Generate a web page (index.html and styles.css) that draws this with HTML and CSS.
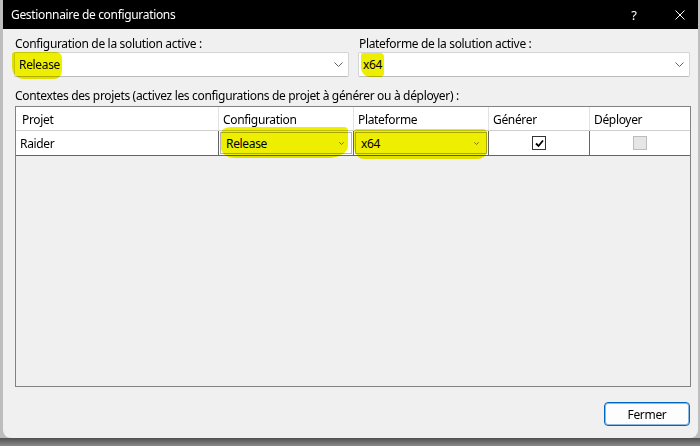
FILE: index.html
```html
<!DOCTYPE html>
<html lang="fr">
<head>
<meta charset="utf-8">
<title>Gestionnaire de configurations</title>
<link rel="stylesheet" href="styles.css">
</head>
<body>
<div class="screen">
  <div class="edge"></div>
  <div class="dialog">
    <div class="titlebar">
      <span class="title">Gestionnaire de configurations</span>
      <div class="tb-buttons">
        <span class="tb-help">?</span>
        <svg class="tb-close" width="10" height="10" viewBox="0 0 10 10"><path d="M0.5 0.5 L9.5 9.5 M9.5 0.5 L0.5 9.5" stroke="#ffffff" stroke-width="1" fill="none"/></svg>
      </div>
    </div>
    <div class="content">
      <div class="top-grid">
        <div class="field">
          <div class="lbl">Configuration de la solution active :</div>
          <div class="combo">
            <span class="combo-text">Release</span>
            <svg class="chev" width="9" height="5" viewBox="0 0 9 5"><path d="M0.5 0.5 L4.5 4.5 L8.5 0.5" stroke="#606060" stroke-width="1" fill="none"/></svg>
            <span class="hl hl-a"></span>
          </div>
        </div>
        <div class="field">
          <div class="lbl">Plateforme de la solution active :</div>
          <div class="combo">
            <span class="combo-text">x64</span>
            <svg class="chev" width="9" height="5" viewBox="0 0 9 5"><path d="M0.5 0.5 L4.5 4.5 L8.5 0.5" stroke="#606060" stroke-width="1" fill="none"/></svg>
            <span class="hl hl-b"></span>
          </div>
        </div>
      </div>
      <div class="lbl ctx">Contextes des projets (activez les configurations de projet à générer ou à déployer) :</div>
      <div class="grid-table">
        <div class="row head">
          <div class="cell first">Projet</div>
          <div class="cell">Configuration</div>
          <div class="cell">Plateforme</div>
          <div class="cell">Générer</div>
          <div class="cell last">Déployer</div>
        </div>
        <div class="row data">
          <div class="cell">Raider</div>
          <div class="cell combo-cell">
            <div class="mini-combo">
              <span>Release</span>
              <svg class="mini-chev" width="5" height="3" viewBox="0 0 5 3"><path d="M0.3 0.3 L2.5 2.5 L4.7 0.3" stroke="#707070" stroke-width="0.9" fill="none"/></svg>
              <span class="hl hl-c"></span>
            </div>
          </div>
          <div class="cell combo-cell">
            <div class="mini-combo">
              <span>x64</span>
              <svg class="mini-chev" width="5" height="3" viewBox="0 0 5 3"><path d="M0.3 0.3 L2.5 2.5 L4.7 0.3" stroke="#707070" stroke-width="0.9" fill="none"/></svg>
              <span class="hl hl-d"></span>
            </div>
          </div>
          <div class="cell center">
            <span class="check on"><svg width="11" height="11" viewBox="0 0 11 11"><path d="M2 5.5 L4.5 8 L9 2.5" stroke="#000" stroke-width="1.8" fill="none"/></svg></span>
          </div>
          <div class="cell center last">
            <span class="check off"></span>
          </div>
        </div>
      </div>
      <div class="footer">
        <button class="btn">Fermer</button>
      </div>
    </div>
  </div>
  <div class="edge-right"></div>
</div>
</body>
</html>
```
FILE: styles.css
```css
html, body {
  margin: 0;
  padding: 0;
}
body {
  width: 700px;
  height: 446px;
  overflow: hidden;
  font-family: "Noto Sans", "Liberation Sans", sans-serif;
  font-size: 12px;
  letter-spacing: -0.33px;
  color: #000;
}
.screen {
  display: flex;
  height: 446px;
  background: linear-gradient(to bottom, #bdbdbd 0, #bdbdbd 438px, #505050 438px, #8a8a8a 446px);
}
.edge {
  width: 3px;
  flex: none;
}
.edge-right {
  width: 2px;
  flex: none;
}
.dialog {
  width: 695px;
  height: 438px;
  flex: none;
  background: #f0f0f0;
  border-radius: 0 0 8px 8px;
  display: flex;
  flex-direction: column;
}
.titlebar {
  height: 29px;
  background: #000;
  color: #fff;
  display: flex;
  align-items: center;
  padding: 0 13px 0 8px;
  flex: none;
}
.title {
  font-size: 12px;
  line-height: 16px;
}
.tb-buttons {
  margin-left: auto;
  display: flex;
  align-items: center;
}
.tb-help {
  font-size: 13px;
  line-height: 16px;
  width: 6px;
  text-align: center;
  margin-right: 38px;
}
.tb-close {
  display: block;
}
.content {
  padding: 7px 8px 0 11px;
  display: flex;
  flex-direction: column;
}
.top-grid {
  display: grid;
  grid-template-columns: 335px 1fr;
  column-gap: 9px;
}
.lbl {
  line-height: 16px;
  height: 16px;
  padding-left: 1px;
  white-space: nowrap;
}
.combo {
  position: relative;
  height: 25px;
  box-sizing: border-box;
  border: 1px solid #d4d4d4;
  border-bottom-color: #bcbcbc;
  border-radius: 2px;
  background: #fff;
  display: flex;
  align-items: center;
  padding: 0 5px 0 4px;
}
.combo-text {
  line-height: 16px;
}
.chev {
  margin-left: auto;
  display: block;
}
.hl {
  position: absolute;
  background: #eeee00;
  mix-blend-mode: multiply;
  pointer-events: none;
}
.hl-a {
  left: -3px;
  top: -1px;
  width: 50px;
  height: 27px;
  border-radius: 3px 6px 8px 12px;
}
.hl-b {
  left: 2px;
  top: 0px;
  width: 23px;
  height: 24px;
  border-radius: 2px 4px 4px 9px;
}
.ctx {
  margin-top: 11px;
}
.grid-table {
  margin-top: 2px;
  margin-left: 1px;
  width: 676px;
  height: 281px;
  box-sizing: border-box;
  border: 1px solid #828282;
  background: #f0f0f0;
}
.row {
  display: grid;
  grid-template-columns: 203px 135px 135px 101px 1fr;
}
.cell {
  box-sizing: border-box;
  background: #fff;
  display: flex;
  align-items: center;
  white-space: nowrap;
}
.head .cell {
  height: 24px;
  border-right: 1px solid #e2e2e2;
  border-bottom: 1px solid #cfcfcf;
  padding-left: 4px;
  padding-top: 2px;
}
.head .cell.first {
  padding-left: 6px;
}
.data .cell {
  height: 25px;
  border-right: 1px solid #646464;
  border-bottom: 1px solid #646464;
  padding-left: 4px;
}
.cell.last {
  border-right: none !important;
}
.data .combo-cell {
  padding: 1px;
}
.mini-combo {
  position: relative;
  flex: 1;
  height: 22px;
  box-sizing: border-box;
  border: 1px solid #b4b4b4;
  display: flex;
  align-items: center;
  padding: 0 7px 0 5px;
  background: #fff;
}
.mini-chev {
  margin-left: auto;
  display: block;
}
.hl-c {
  left: 0px;
  top: -6px;
  width: 127px;
  height: 31px;
  border-radius: 10px 4px 20px 14px / 6px 4px 12px 10px;
}
.hl-d {
  left: -2px;
  top: -4px;
  width: 133px;
  height: 30px;
  border-radius: 3px 4px 10px 10px / 3px 4px 8px 12px;
}
.data .cell.center {
  justify-content: center;
  padding-left: 0;
}
.check {
  width: 14px;
  height: 14px;
  box-sizing: border-box;
  display: flex;
  align-items: center;
  justify-content: center;
}
.check.on {
  border: 1px solid #333;
  background: #fff;
}
.check.off {
  border: 1px solid #bcbcbc;
  background: #e6e6e6;
}
.check svg {
  display: block;
}
.footer {
  display: flex;
  justify-content: flex-end;
  margin-top: 15px;
}
.btn {
  width: 86px;
  height: 24px;
  box-sizing: border-box;
  border: 1px solid #0067c0;
  box-shadow: inset 0 0 0 1px rgba(0, 103, 192, 0.45);
  border-radius: 4px;
  background: #fdfdfd;
  font-family: "Noto Sans", "Liberation Sans", sans-serif;
  font-size: 12px;
  letter-spacing: -0.33px;
  color: #000;
  padding: 0;
}
```
